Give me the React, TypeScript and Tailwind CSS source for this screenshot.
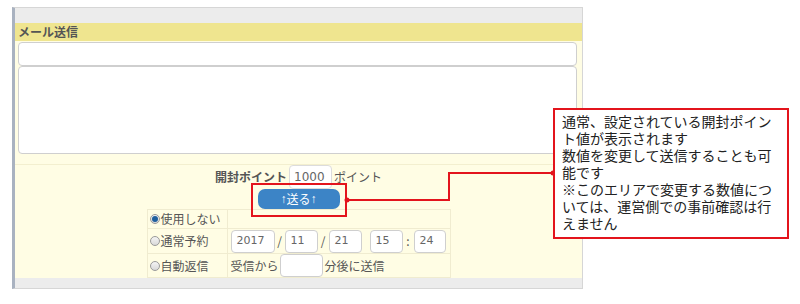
import React from "react";

const jp = { fontFamily: '"Noto Sans CJK JP", "Noto Sans", sans-serif' };

function Box({ w, h = 23, text, className = "" }: { w: number; h?: number; text?: string; className?: string }) {
  return (
    <div
      className={`flex items-center rounded-[4px] border border-[#cfcfcf] bg-white pl-[5px] text-[11px] text-[#666] ${className}`}
      style={{ width: w, height: h, fontFamily: '"DejaVu Sans", sans-serif' }}
    >
      {text}
    </div>
  );
}

function Radio({ checked }: { checked?: boolean }) {
  return (
    <span className="flex h-[10px] w-[10px] items-center justify-center rounded-full border border-[#9a9a9a] bg-gradient-to-b from-[#f4f4f4] to-[#d9d9d9]">
      {checked && <span className="h-[6px] w-[6px] rounded-full bg-[#1f5f9e]" />}
    </span>
  );
}

const arrow = { fontFamily: '"Liberation Sans", sans-serif' };

export default function App() {
  return (
    <div className="relative h-[304px] w-[800px] overflow-hidden bg-white" style={jp}>
      <div className="ml-[12px] pt-[7px]">
        <div className="flex h-[282px] w-[571px] flex-col border-t border-r border-b border-l-[3px] border-t-[#d6d6d6] border-r-[#d6d6d6] border-b-[#d6d6d6] border-l-[#a9b2c0]">
          <div className="h-[16px] bg-[#ececec]" />
          <div className="flex h-[18px] items-center bg-[#efe58f] pl-[3px] text-[12px] font-bold text-[#555]">
            メール送信
          </div>
          <div className="flex flex-1 flex-col bg-[#fffde4]">
            <div className="pl-[3px] pr-[5px] pt-[1px]">
              <div className="h-[24px] rounded-[4px] border border-[#cfcfcf] bg-white" />
              <div className="h-[88px] rounded-[4px] border border-[#cfcfcf] bg-white" />
            </div>
            <div className="mt-[10px] flex flex-1 flex-col items-center border-t border-[#f3efcf]">
              <div className="flex h-[24px] items-center text-[12px] text-[#555]">
                <span className="font-bold">開封ポイント</span>
                <div className="ml-[2px] flex h-[24px] w-[43px] items-center rounded-[4px] border border-[#dcdcdc] bg-white pl-[4px] text-[12px] text-[#666]" style={{ fontFamily: '"DejaVu Sans", sans-serif' }}>
                  1000
                </div>
                <span className="ml-[2px]">ポイント</span>
              </div>
              <div className="flex h-[20px] w-[82px] items-center justify-center rounded-[7px] bg-[#3c84c6] text-[12px] text-white">
                <span style={arrow}>↑</span>
                <span>送る</span>
                <span style={arrow}>↑</span>
              </div>
              <div className="w-[304px] border border-[#f0ecd0] text-[12px] text-[#555]">
                <div className="flex h-[19px] border-b border-[#f0ecd0]">
                  <div className="flex w-[80px] items-center gap-[1px] border-r border-[#f0ecd0] pl-[2px]">
                    <Radio checked />
                    <span>使用しない</span>
                  </div>
                  <div className="flex-1" />
                </div>
                <div className="flex h-[25px] border-b border-[#f0ecd0]">
                  <div className="flex w-[80px] items-center gap-[1px] border-r border-[#f0ecd0] pl-[2px]">
                    <Radio />
                    <span>通常予約</span>
                  </div>
                  <div className="flex flex-1 items-center pl-[3px]">
                    <Box w={44} text="2017" />
                    <span className="w-[10px] text-center">/</span>
                    <Box w={33} text="11" />
                    <span className="w-[11px] text-center">/</span>
                    <Box w={33} text="21" />
                    <span className="w-[8px]" />
                    <Box w={33} text="15" />
                    <span className="w-[11px] text-center">:</span>
                    <Box w={32} text="24" />
                  </div>
                </div>
                <div className="flex h-[23px]">
                  <div className="flex w-[80px] items-center gap-[1px] border-r border-[#f0ecd0] pl-[2px]">
                    <Radio />
                    <span>自動返信</span>
                  </div>
                  <div className="flex flex-1 items-center pl-[3px]">
                    <span>受信から</span>
                    <Box w={43} h={23} className="ml-[1px]" />
                    <span className="ml-[2px]">分後に送信</span>
                  </div>
                </div>
              </div>
            </div>
            <div className="h-[10px] bg-[#ececec]" />
          </div>
        </div>
      </div>

      {/* annotation overlay */}
      <div className="absolute left-[251px] top-[183px] h-[34px] w-[96px] border-2 border-[#e3141c]" />
      <svg className="pointer-events-none absolute left-0 top-0" width="800" height="304">
        <polyline points="347,200 449,200 449,173 553,173" fill="none" stroke="#e3141c" strokeWidth="2" />
        <circle cx="347" cy="200" r="2.5" fill="#e3141c" />
        <circle cx="553" cy="173" r="2.5" fill="#e3141c" />
      </svg>
      <div className="absolute left-[553px] top-[108px] h-[131px] w-[236px] border-2 border-[#e3141c] bg-white pl-[7px] pt-[3px] text-[14px] leading-[17px] whitespace-nowrap text-[#222]">
        <div className="h-[17px]">通常、設定されている開封ポイン</div>
        <div className="h-[17px]">ト値が表示されます</div>
        <div className="h-[17px]">数値を変更して送信することも可</div>
        <div className="h-[17px]">能です</div>
        <div className="h-[17px]">※このエリアで変更する数値につ</div>
        <div className="h-[17px]">いては、運営側での事前確認は行</div>
        <div className="h-[17px]">えません</div>
      </div>
    </div>
  );
}
